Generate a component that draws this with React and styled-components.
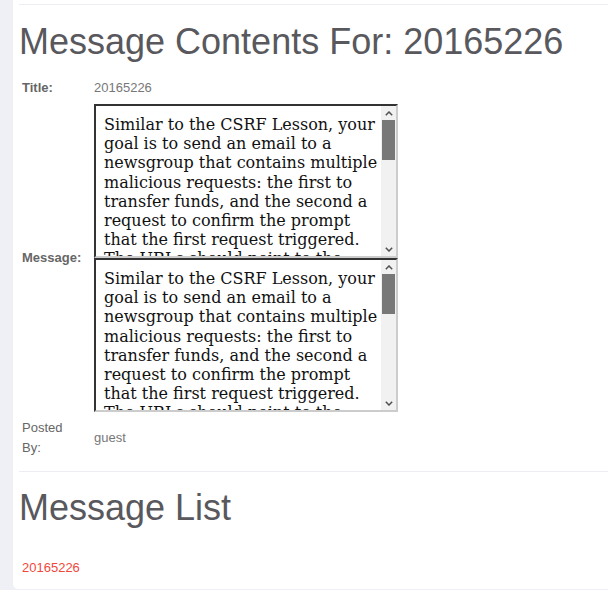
import React from 'react'
import styled, { createGlobalStyle } from 'styled-components'

const GlobalStyle = createGlobalStyle`
  html, body {
    margin: 0;
    padding: 0;
    background: #eff0f5;
  }
`

const message =
  'Similar to the CSRF Lesson, your goal is to send an email to a newsgroup that contains multiple malicious requests: the first to transfer funds, and the second a request to confirm the prompt that the first request triggered. The URLs should point to the attack servlet with the CSRF Lesson\'s Screen, menu parameters and an additional parameter "transferFunds" having a numeric value such as "5000" to initiate a transfer and a string value "CONFIRM" to complete it. You can copy the CSRF Lesson\'s URL from the left navigation bar and build the malicious requests from it. Stop the first request from finishing before the second request is sent, by placing both of them inside hidden frames, image tags or a script block of the message. When the message is viewed by the victim, both requests will be sent in the right order and the transfer will go through without any warning to the user.'

const Chevron = ({ down }) => (
  <svg width="8" height="5" viewBox="0 0 8 5">
    <path
      d={down ? 'M0.8 0.8 L4 4 L7.2 0.8' : 'M0.8 4.2 L4 1 L7.2 4.2'}
      fill="none"
      stroke="#505050"
      strokeWidth="1.5"
    />
  </svg>
)

const MessageBox = ({ text }) => (
  <BoxFrame>
    <BoxText readOnly defaultValue={text} />
    <ScrollTrack>
      <ScrollButton>
        <Chevron />
      </ScrollButton>
      <ScrollThumb />
      <ScrollButton bottom>
        <Chevron down />
      </ScrollButton>
    </ScrollTrack>
  </BoxFrame>
)

const App = () => {
  return (
    <>
      <GlobalStyle />
      <Page>
        <Panel>
          <Divider />
          <Heading>Message Contents For: 20165226</Heading>
          <DetailsTable>
            <tbody>
              <tr>
                <Label bold>Title:</Label>
                <Value>20165226</Value>
              </tr>
              <tr>
                <Label bold>Message:</Label>
                <Value>
                  <MessageBox text={message} />
                  <MessageBox text={message} />
                </Value>
              </tr>
              <tr>
                <Label>Posted By:</Label>
                <Value>guest</Value>
              </tr>
            </tbody>
          </DetailsTable>
          <Divider spaced />
          <Heading list>Message List</Heading>
          <MessageLink href="#">20165226</MessageLink>
        </Panel>
      </Page>
    </>
  )
}

export default App

const Page = styled.div`
  display: flex;
  min-height: 590px;
  background: #eff0f5;
  font-family: 'Liberation Sans', Arial, sans-serif;
  font-size: 13px;
  line-height: 20px;
  color: #666;
`

const Panel = styled.div`
  flex: 1;
  display: flex;
  flex-direction: column;
  align-items: flex-start;
  margin-left: 13px;
  height: 589px;
  padding: 4px 0 0 6px;
  background: #fff;
  border-radius: 0 0 0 5px;
  box-sizing: border-box;
`

const Divider = styled.hr`
  align-self: stretch;
  margin: ${props => (props.spaced ? '10px 0 0' : '0')};
  border: 0;
  border-top: 1px solid #eceef1;
`

const Heading = styled.h1`
  margin: ${props => (props.list ? '15px 0 0' : '16px 0 13px')};
  font-family: 'Liberation Sans', Arial, sans-serif;
  font-size: 36px;
  font-weight: 400;
  line-height: 41px;
  color: #58585d;
`

const DetailsTable = styled.table`
  border-collapse: collapse;
`

const Label = styled.td`
  width: 62px;
  padding: 3px 7px 3px 3px;
  vertical-align: middle;
  font-weight: ${props => (props.bold ? 700 : 400)};
  color: #666;
`

const Value = styled.td`
  padding: 3px;
  vertical-align: middle;
  color: #777;
`

const BoxFrame = styled.div`
  display: flex;
  width: 304px;
  height: 154px;
  box-sizing: border-box;
  border: 2px solid;
  border-color: #333 #ccc #ccc #333;
  background: #fff;
`

const BoxText = styled.textarea`
  flex: 1;
  min-width: 0;
  margin: 0;
  padding: 9px 3px 0 8px;
  border: 0;
  outline: none;
  overflow: hidden;
  resize: none;
  background: transparent;
  font-family: 'DejaVu Serif', serif;
  font-size: 16px;
  line-height: 19.2px;
  color: #111;
`

const ScrollTrack = styled.div`
  display: flex;
  flex-direction: column;
  width: 15px;
  background: #f1f1f1;
`

const ScrollButton = styled.div`
  display: flex;
  align-items: center;
  justify-content: center;
  height: 14px;
  margin-top: ${props => (props.bottom ? 'auto' : '0')};
`

const ScrollThumb = styled.div`
  height: 40px;
  margin: 0 1px;
  background: #787878;
`

const MessageLink = styled.a`
  margin: 30px 0 0 3px;
  color: #f0483c;
  text-decoration: none;
`
